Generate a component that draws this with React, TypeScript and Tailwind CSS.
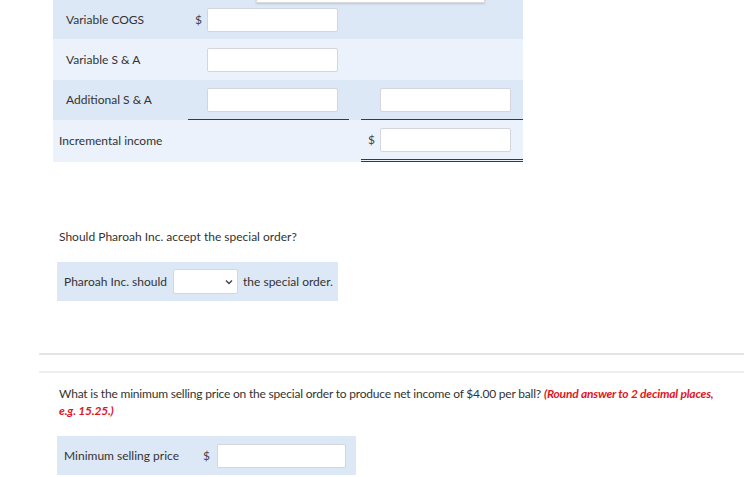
import React from "react";

const dark = "bg-[#dde8f7]";
const light = "bg-[#ebf2fc]";

function Field({ className = "" }: { className?: string }) {
  return (
    <div
      className={`h-[24px] w-[131px] rounded-[2px] border border-[#d3d6da] bg-white ${className}`}
    />
  );
}

function Row({
  label,
  bg,
  h,
  indent = "pl-[13px]",
  col2,
  col3,
  under2 = "",
  under3 = "",
}: {
  label: string;
  bg: string;
  h: string;
  indent?: string;
  col2?: React.ReactNode;
  col3?: React.ReactNode;
  under2?: string;
  under3?: string;
}) {
  return (
    <div className={`grid grid-cols-[135px_161px_12px_162px] ${bg} ${h}`}>
      <div className={`flex items-center ${indent}`}>{label}</div>
      <div className={`flex items-center ${under2}`}>{col2}</div>
      <div />
      <div className={`flex items-center ${under3}`}>{col3}</div>
    </div>
  );
}

function Cell({ dollar }: { dollar?: boolean }) {
  return (
    <>
      <span className="w-[19px] pl-[7px] text-[#444]">{dollar ? "$" : ""}</span>
      <Field />
    </>
  );
}

export default function App() {
  return (
    <div
      className="relative min-h-[477px] w-[744px] overflow-hidden bg-white text-[12px] text-[#333]"
      style={{ fontFamily: "Lato, 'Open Sans', sans-serif" }}
    >
      {/* edge of a popup above the viewport */}
      <div className="absolute left-[256px] top-[-20px] z-10 h-[23px] w-[229px] border border-[#d8d8d8] bg-white shadow-[0_1px_2px_rgba(0,0,0,0.15)]" />

      <div className="ml-[53px] w-[470px]">
        <Row label="Variable COGS" bg={dark} h="h-[39px]" col2={<Cell dollar />} />
        <Row label="Variable S & A" bg={light} h="h-[41px]" col2={<Cell />} />
        <Row
          label="Additional S & A"
          bg={dark}
          h="h-[40px]"
          col2={<Cell />}
          col3={<Cell />}
          under2="border-b border-[#3a3a3a]"
          under3="border-b border-[#3a3a3a]"
        />
        <Row
          label="Incremental income"
          bg={light}
          h="h-[42px]"
          indent="pl-[6px]"
          col3={<Cell dollar />}
          under3="border-b-[3px] border-double border-[#3a3a3a]"
        />
      </div>

      <p className="ml-[59px] mt-[67px] leading-[16px]">Should Pharoah Inc. accept the special order?</p>

      <div className={`ml-[57px] mt-[17px] flex h-[39px] w-[281px] items-center ${dark}`}>
        <span className="pl-[7px]">Pharoah Inc. should</span>
        <div className="ml-[6px] flex h-[25px] w-[65px] items-center justify-end rounded-[2px] border border-[#d3d6da] bg-white pr-[4px]">
          <svg width="8" height="6" viewBox="0 0 8 6" fill="none">
            <path d="M1 1.5 L4 4.5 L7 1.5" stroke="#444" strokeWidth="1.4" />
          </svg>
        </div>
        <span className="ml-[5px]">the special order.</span>
      </div>

      <div className="ml-[39px] mt-[52px] h-[2px] bg-[#e4e4e4]" />
      <div className="ml-[39px] mt-[16px] h-[2px] bg-[#eeeeee]" />

      <p className="ml-[59px] mt-[12px] w-[662px] leading-[17px] tracking-[-0.2px]">
        What is the minimum selling price on the special order to produce net income of $4.00 per ball?{" "}
        <span className="font-bold italic tracking-[-0.2px] text-[#e0161e]">
          (Round answer to 2 decimal places, e.g. 15.25.)
        </span>
      </p>

      <div className={`ml-[57px] mt-[17px] flex h-[39px] w-[299px] items-center ${dark}`}>
        <span className="w-[140px] pl-[7px]">Minimum selling price</span>
        <span className="w-[20px] pl-[6px] text-[#444]">$</span>
        <div className="h-[24px] w-[129px] rounded-[2px] border border-[#d3d6da] bg-white" />
      </div>
    </div>
  );
}
